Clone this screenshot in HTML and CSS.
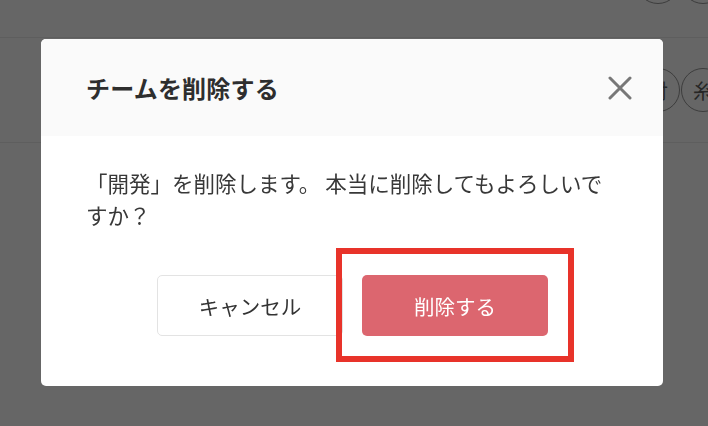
FILE: index.html
```html
<!DOCTYPE html>
<html lang="ja">
<head>
<meta charset="utf-8">
<title>チームを削除する</title>
<link rel="stylesheet" href="styles.css">
</head>
<body>
<div class="page">
  <div class="topbar">
    <div class="avatars">
      <span class="avatar"></span>
      <span class="avatar"></span>
    </div>
  </div>
  <div class="row">
    <div class="avatars">
      <span class="avatar">対</span>
      <span class="avatar">糸</span>
    </div>
  </div>
</div>

<div class="overlay">
  <div class="modal" role="dialog" aria-labelledby="modal-title">
    <div class="modal-header">
      <h2 id="modal-title" class="modal-title">チームを削除する</h2>
      <button class="close" aria-label="閉じる">
        <svg width="24" height="24" viewBox="0 0 24 24"><path d="M2 2 L22 22 M22 2 L2 22" stroke="#777" stroke-width="3" stroke-linecap="round" fill="none"/></svg>
      </button>
    </div>
    <div class="modal-body">
      <p class="message">「開発」を削除します。 本当に削除してもよろしいですか？</p>
      <div class="actions">
        <button class="btn btn-cancel">キャンセル</button>
        <div class="highlight-wrap">
          <button class="btn btn-danger">削除する</button>
          <span class="highlight"></span>
        </div>
      </div>
    </div>
  </div>
</div>
</body>
</html>
```

FILE: styles.css
```css
* { box-sizing: border-box; }

html, body {
  margin: 0;
  padding: 0;
  height: 100%;
}

body {
  background: #666666;
  font-family: "Noto Sans CJK JP", "Noto Sans", sans-serif;
  color: #333;
  overflow: hidden;
}

.page {
  width: 708px;
}

.topbar {
  height: 38px;
  border-bottom: 1px solid #5e5e5e;
  display: flex;
  justify-content: flex-end;
  align-items: flex-end;
  padding-bottom: 33px;
  overflow: hidden;
}

.row {
  height: 105px;
  border-bottom: 1px solid #5e5e5e;
  display: flex;
  justify-content: flex-end;
  align-items: center;
  overflow: hidden;
}

.avatars {
  display: flex;
  gap: 1px;
  margin-right: -17px;
  flex-shrink: 0;
}

.avatar {
  width: 44px;
  height: 44px;
  border-radius: 50%;
  border: 1.5px solid #3d3d3d;
  display: flex;
  align-items: center;
  justify-content: center;
  font-size: 20px;
  color: #262626;
  flex-shrink: 0;
}

.overlay {
  position: fixed;
  inset: 0;
  padding: 39px 0 0 41px;
}

.modal {
  width: 622px;
  height: 347px;
  background: #ffffff;
  border-radius: 5px;
  overflow: hidden;
  display: flex;
  flex-direction: column;
}

.modal-header {
  height: 97px;
  background: #fafafa;
  display: flex;
  align-items: center;
  justify-content: space-between;
  padding: 0 31px 0 45px;
}

.modal-title {
  margin: 0;
  font-size: 24px;
  font-weight: 700;
  color: #2e2e2e;
  letter-spacing: 0.2px;
}

.close {
  border: 0;
  background: none;
  padding: 0;
  width: 24px;
  height: 24px;
  display: flex;
  cursor: pointer;
}

.modal-body {
  padding: 31px 40px 0 45px;
}

.message {
  margin: 0;
  font-size: 21.5px;
  line-height: 32px;
  color: #383838;
}

.actions {
  margin-top: 44px;
  display: flex;
  justify-content: center;
  gap: 19px;
  padding-left: 1px;
  padding-right: 5px;
}

.btn {
  width: 186px;
  height: 61px;
  border-radius: 5px;
  font-family: inherit;
  font-size: 20.5px;
  cursor: pointer;
}

.btn-cancel {
  background: #ffffff;
  border: 1px solid #e3e3e3;
  color: #333;
}

.btn-danger {
  background: #dc666f;
  border: 0;
  color: #ffffff;
}

.highlight-wrap {
  position: relative;
  display: flex;
}

.highlight {
  position: absolute;
  inset: -27px -26px -26px -26px;
  border: 6px solid #e8332a;
  pointer-events: none;
}
```
